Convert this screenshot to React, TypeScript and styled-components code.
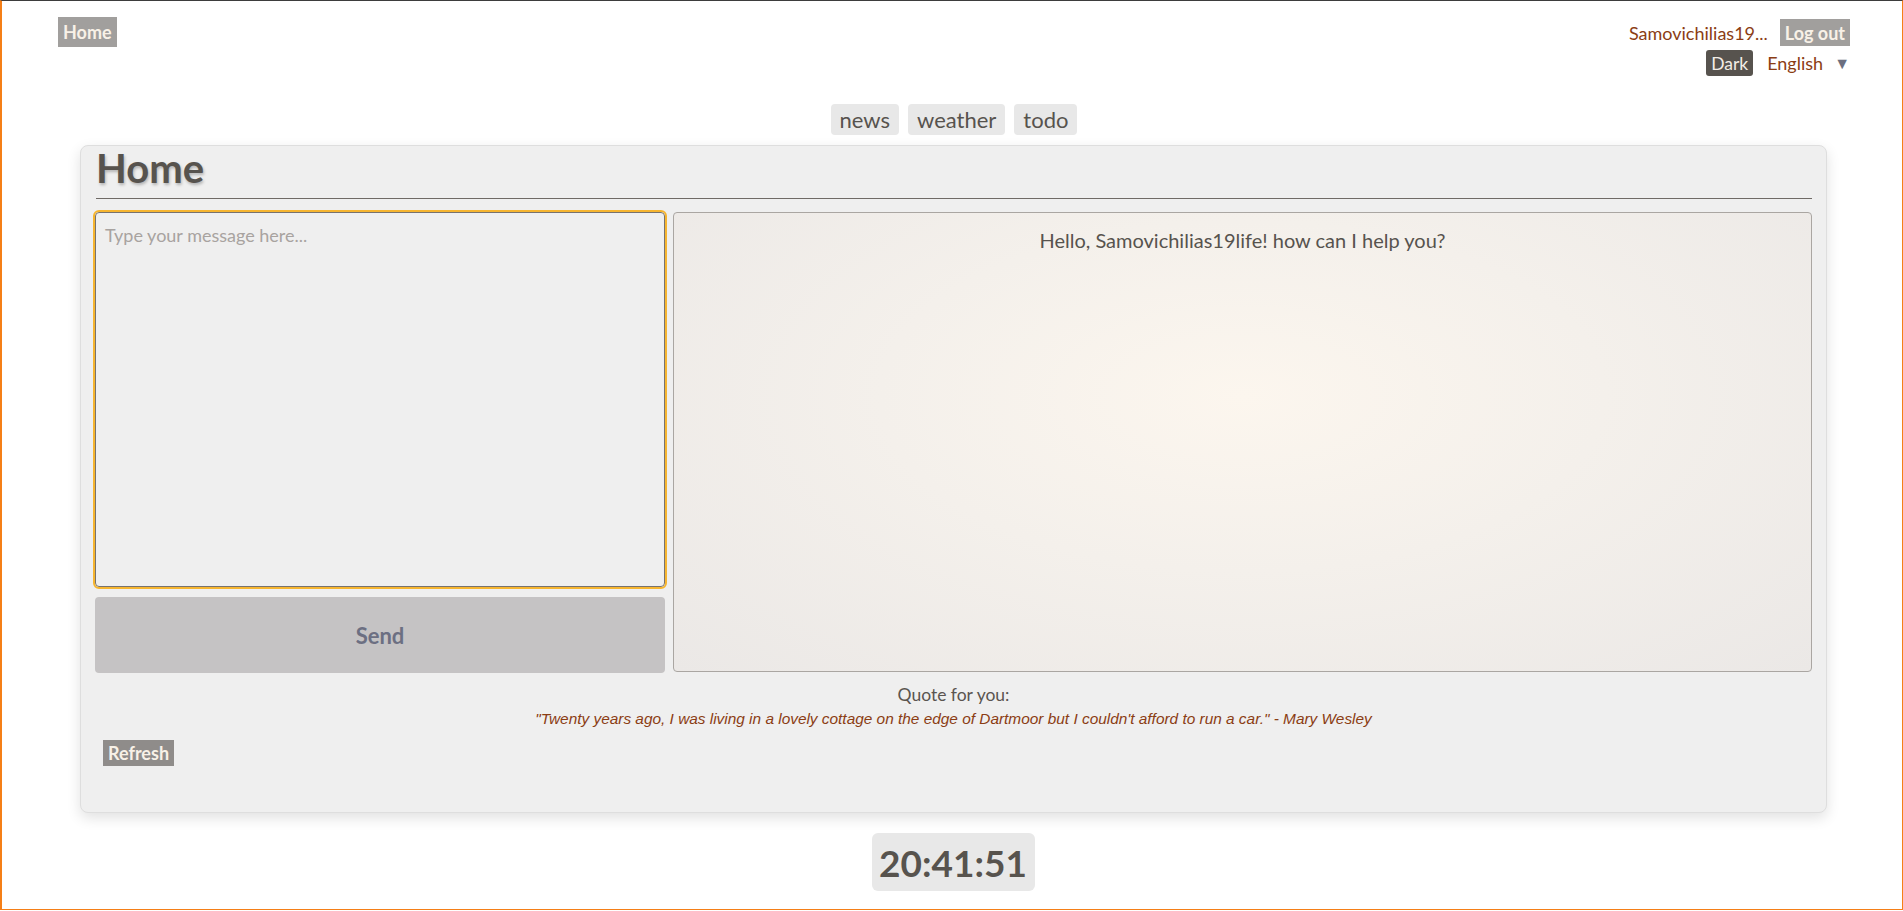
import React, { useState } from "react";
import styled, { createGlobalStyle } from "styled-components";

const GlobalStyle = createGlobalStyle`
    html, body {
        margin: 0;
        padding: 0;
        background: #ffffff;
        font-family: Lato, "Noto Sans", sans-serif;
        color: #57534e;
    }
    * {
        box-sizing: border-box;
    }
`;

// window frame drawn over the page edges
const Frame = styled.div`
    position: fixed;
    inset: 0 0 1px 0;
    border-top: 1px solid #3d3d3d;
    border-left: 2px solid #f57f17;
    border-right: 1px solid #f57f17;
    border-bottom: 1px solid #f57f17;
    pointer-events: none;
    z-index: 10;
`;

const Page = styled.div`
    min-height: 100vh;
    display: flex;
    flex-direction: column;
`;

// --- Header ---
const Header = styled.header`
    display: flex;
    justify-content: space-between;
    align-items: flex-start;
    padding: 17px 53px 0 58px;
`;

const GrayButton = styled.button`
    background: #a19f9d;
    color: #f8f1e7;
    border: none;
    border-radius: 0;
    font-family: Lato, "Noto Sans", sans-serif;
    font-weight: 700;
    font-size: 18px;
    line-height: 1;
    padding: 0 5px;
    cursor: pointer;
`;

const HomeButton = styled(GrayButton)`
    height: 30px;
`;

const LogoutButton = styled(GrayButton)`
    height: 27px;
    padding: 0 5px;
`;

const UserArea = styled.div`
    display: flex;
    flex-direction: column;
    align-items: flex-end;
    gap: 4px;
    padding-top: 2px;
`;

const UserRow = styled.div`
    display: flex;
    align-items: center;
    gap: 12px;
`;

const UserName = styled.span`
    color: #8b3d14;
    font-size: 18px;
`;

const SettingsRow = styled.div`
    display: flex;
    align-items: center;
    gap: 14px;
`;

const ThemeButton = styled.button`
    background: #57534e;
    color: #f2ede6;
    border: none;
    border-radius: 3px;
    height: 26px;
    padding: 0 5px;
    font-family: Lato, "Noto Sans", sans-serif;
    font-size: 17.5px;
    cursor: pointer;
`;

const LanguageSelect = styled.div`
    display: flex;
    align-items: center;
    gap: 11px;
    color: #8b3d14;
    font-size: 18px;
    cursor: pointer;
`;

const Caret = styled.span`
    color: #6b6f80;
    font-size: 16px;
`;

// --- Tabs ---
const Tabs = styled.nav`
    display: flex;
    justify-content: center;
    gap: 9px;
    margin-top: 28px;
    padding-left: 5px;
`;

const TabButton = styled.button`
    background: #e8e8e8;
    color: #57534e;
    border: none;
    border-radius: 4px;
    height: 31px;
    padding: 0 9px;
    font-family: Lato, "Noto Sans", sans-serif;
    font-size: 22px;
    cursor: pointer;
`;

// --- Main card ---
const Card = styled.main`
    width: 1747px;
    margin: 10px 0 0 80px;
    background: #efefef;
    border: 1px solid #dedede;
    border-radius: 8px;
    box-shadow: 0 5px 14px rgba(0, 0, 0, 0.12);
    padding: 0 14px 46px 14px;
`;

const Title = styled.h1`
    margin: 0;
    font-size: 40px;
    line-height: 44px;
    font-weight: 700;
    color: #57534e;
    padding-left: 1px;
    text-shadow: 1px 2px 3px rgba(0, 0, 0, 0.25);
`;

const Divider = styled.hr`
    margin: 8px 0 0 1px;
    border: none;
    border-top: 1px solid #6f6a66;
`;

const Workspace = styled.div`
    display: grid;
    grid-template-columns: 570px 1fr;
    gap: 8px;
    margin-top: 13px;
`;

const MessageColumn = styled.div`
    display: flex;
    flex-direction: column;
    gap: 10px;
`;

const MessageInput = styled.textarea`
    height: 375px;
    resize: none;
    background: #efefef;
    border: 1px solid #77726e;
    border-radius: 4px;
    outline: 2px solid #f6b530;
    padding: 10px 9px;
    font-family: Lato, "Noto Sans", sans-serif;
    font-size: 18px;
    line-height: 1.35;
    color: #57534e;

    &::placeholder {
        color: #a8a3a0;
    }
`;

const SendButton = styled.button`
    height: 76px;
    background: #c5c3c4;
    color: #6c6f82;
    border: none;
    border-radius: 4px;
    font-family: Lato, "Noto Sans", sans-serif;
    font-size: 22px;
    font-weight: 700;
    cursor: pointer;
`;

const ChatPane = styled.section`
    height: 460px;
    border: 1px solid #aaa6a2;
    border-radius: 4px;
    background: radial-gradient(ellipse at 50% 40%, #fcf6ee 0%, #f4f0eb 45%, #ebe8e6 100%);
    padding-top: 15px;
    text-align: center;
`;

const Greeting = styled.p`
    margin: 0;
    font-size: 20px;
    line-height: 24px;
    color: #57534e;
`;

// --- Quote ---
const QuoteBlock = styled.div`
    margin-top: 11px;
    text-align: center;
`;

const QuoteLabel = styled.div`
    font-size: 17.5px;
    line-height: 22px;
    color: #5a5550;
`;

const QuoteText = styled.div`
    margin-top: 3px;
    font-family: "Liberation Sans", Arial, sans-serif;
    font-style: italic;
    font-size: 15.4px;
    line-height: 20px;
    color: #8b3d14;
`;

const RefreshButton = styled.button`
    display: block;
    margin: 11px 0 0 8px;
    height: 26px;
    padding: 0 5px;
    background: #8f8c8a;
    color: #f8f1e7;
    border: none;
    font-family: Lato, "Noto Sans", sans-serif;
    font-size: 18px;
    font-weight: 700;
    cursor: pointer;
`;

// --- Clock ---
const ClockWrap = styled.div`
    display: flex;
    justify-content: center;
    margin-top: 20px;
    padding-left: 3px;
`;

const Clock = styled.div`
    background: #e8e8e8;
    border-radius: 6px;
    width: 163px;
    height: 58px;
    display: flex;
    align-items: center;
    justify-content: center;
    font-size: 37px;
    font-weight: 700;
    color: #57534e;
`;

const tabs = ["news", "weather", "todo"];

const App: React.FC = () => {
    const [message, setMessage] = useState("");

    return (
        <>
            <GlobalStyle />
            <Frame />
            <Page>
                <Header>
                    <HomeButton>Home</HomeButton>
                    <UserArea>
                        <UserRow>
                            <UserName>Samovichilias19...</UserName>
                            <LogoutButton>Log out</LogoutButton>
                        </UserRow>
                        <SettingsRow>
                            <ThemeButton>Dark</ThemeButton>
                            <LanguageSelect>
                                English <Caret>▼</Caret>
                            </LanguageSelect>
                        </SettingsRow>
                    </UserArea>
                </Header>

                <Tabs>
                    {tabs.map((t) => (
                        <TabButton key={t}>{t}</TabButton>
                    ))}
                </Tabs>

                <Card>
                    <Title>Home</Title>
                    <Divider />
                    <Workspace>
                        <MessageColumn>
                            <MessageInput
                                placeholder="Type your message here..."
                                value={message}
                                onChange={(e) => setMessage(e.target.value)}
                            />
                            <SendButton>Send</SendButton>
                        </MessageColumn>
                        <ChatPane>
                            <Greeting>Hello, Samovichilias19life! how can I help you?</Greeting>
                        </ChatPane>
                    </Workspace>
                    <QuoteBlock>
                        <QuoteLabel>Quote for you:</QuoteLabel>
                        <QuoteText>
                            "Twenty years ago, I was living in a lovely cottage on the edge of Dartmoor but I couldn't afford to run a car." - Mary Wesley
                        </QuoteText>
                    </QuoteBlock>
                    <RefreshButton>Refresh</RefreshButton>
                </Card>

                <ClockWrap>
                    <Clock>20:41:51</Clock>
                </ClockWrap>
            </Page>
        </>
    );
};

export default App;
